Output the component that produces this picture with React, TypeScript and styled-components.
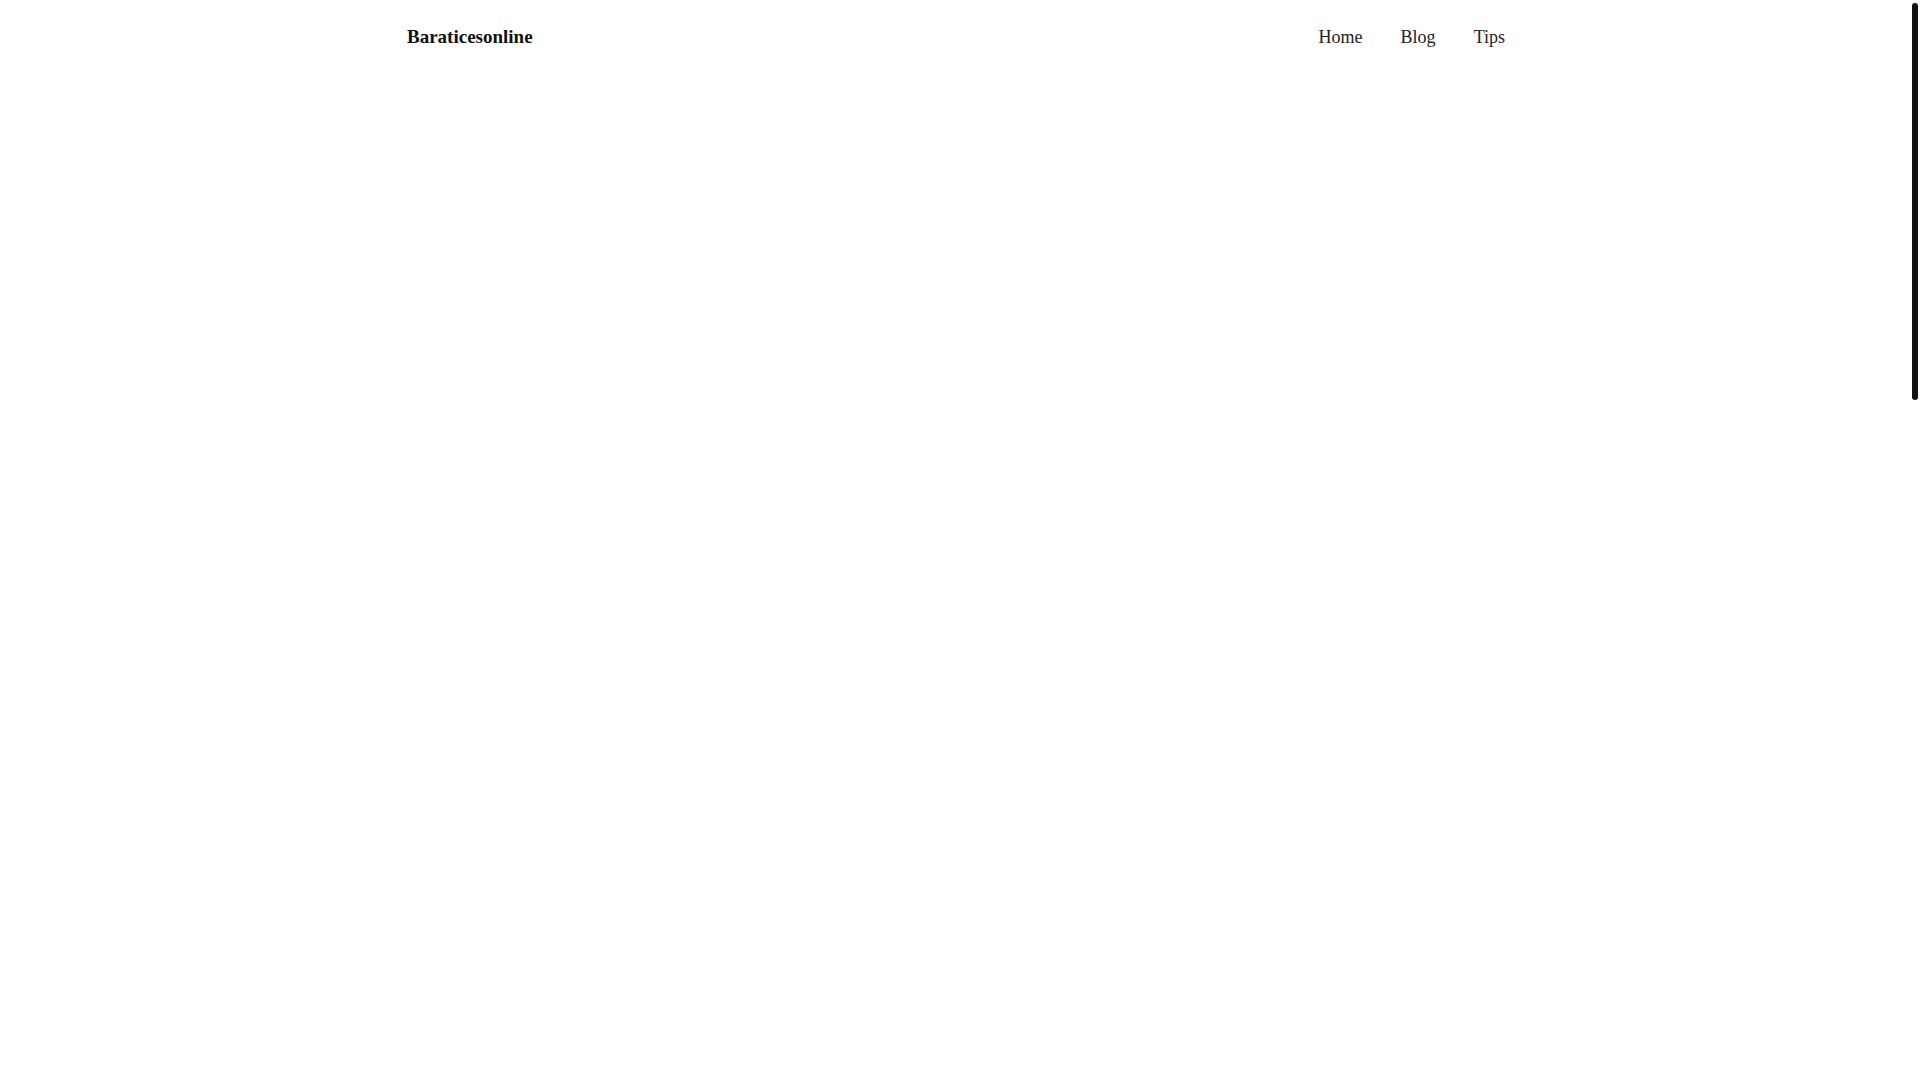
import React from "react";
import styled, { createGlobalStyle } from "styled-components";

const GlobalStyle = createGlobalStyle`
  html, body {
    margin: 0;
    padding: 0;
    background: #fff;
  }
  body {
    font-family: "Liberation Serif", "DejaVu Serif", serif;
    color: #111;
  }
`;

// leaves room on the right for the scroll gutter
const Page = styled.div`
  padding-right: 8px;
  background: #fff;
`;

const ScrollThumb = styled.div`
  position: fixed;
  top: 3px;
  right: 2px;
  width: 6px;
  height: 397px;
  border-radius: 3px;
  background: #111;
  z-index: 10;
`;

const Header = styled.header`
  width: 100%;
`;

const Bar = styled.div`
  max-width: 1098px;
  margin: 0 auto;
  height: 74px;
  display: flex;
  align-items: center;
  justify-content: space-between;
`;

const Logo = styled.a`
  font-size: 19px;
  font-weight: 700;
  color: #111;
  text-decoration: none;
  cursor: pointer;
`;

const Nav = styled.nav`
  display: flex;
  align-items: center;
  gap: 38px;
`;

const NavLink = styled.a`
  font-size: 18px;
  color: #222;
  text-decoration: none;
  cursor: pointer;
`;

const Main = styled.main`
  height: 2830px;
`;

const App = () => {
  return (
    <>
      <GlobalStyle />
      <Page>
        <Header>
          <Bar>
            <Logo href="#home">Baraticesonline</Logo>
            <Nav>
              <NavLink href="#home">Home</NavLink>
              <NavLink href="#blog">Blog</NavLink>
              <NavLink href="#tips">Tips</NavLink>
            </Nav>
          </Bar>
        </Header>
        <Main />
      </Page>
      <ScrollThumb />
    </>
  );
};

export default App;
